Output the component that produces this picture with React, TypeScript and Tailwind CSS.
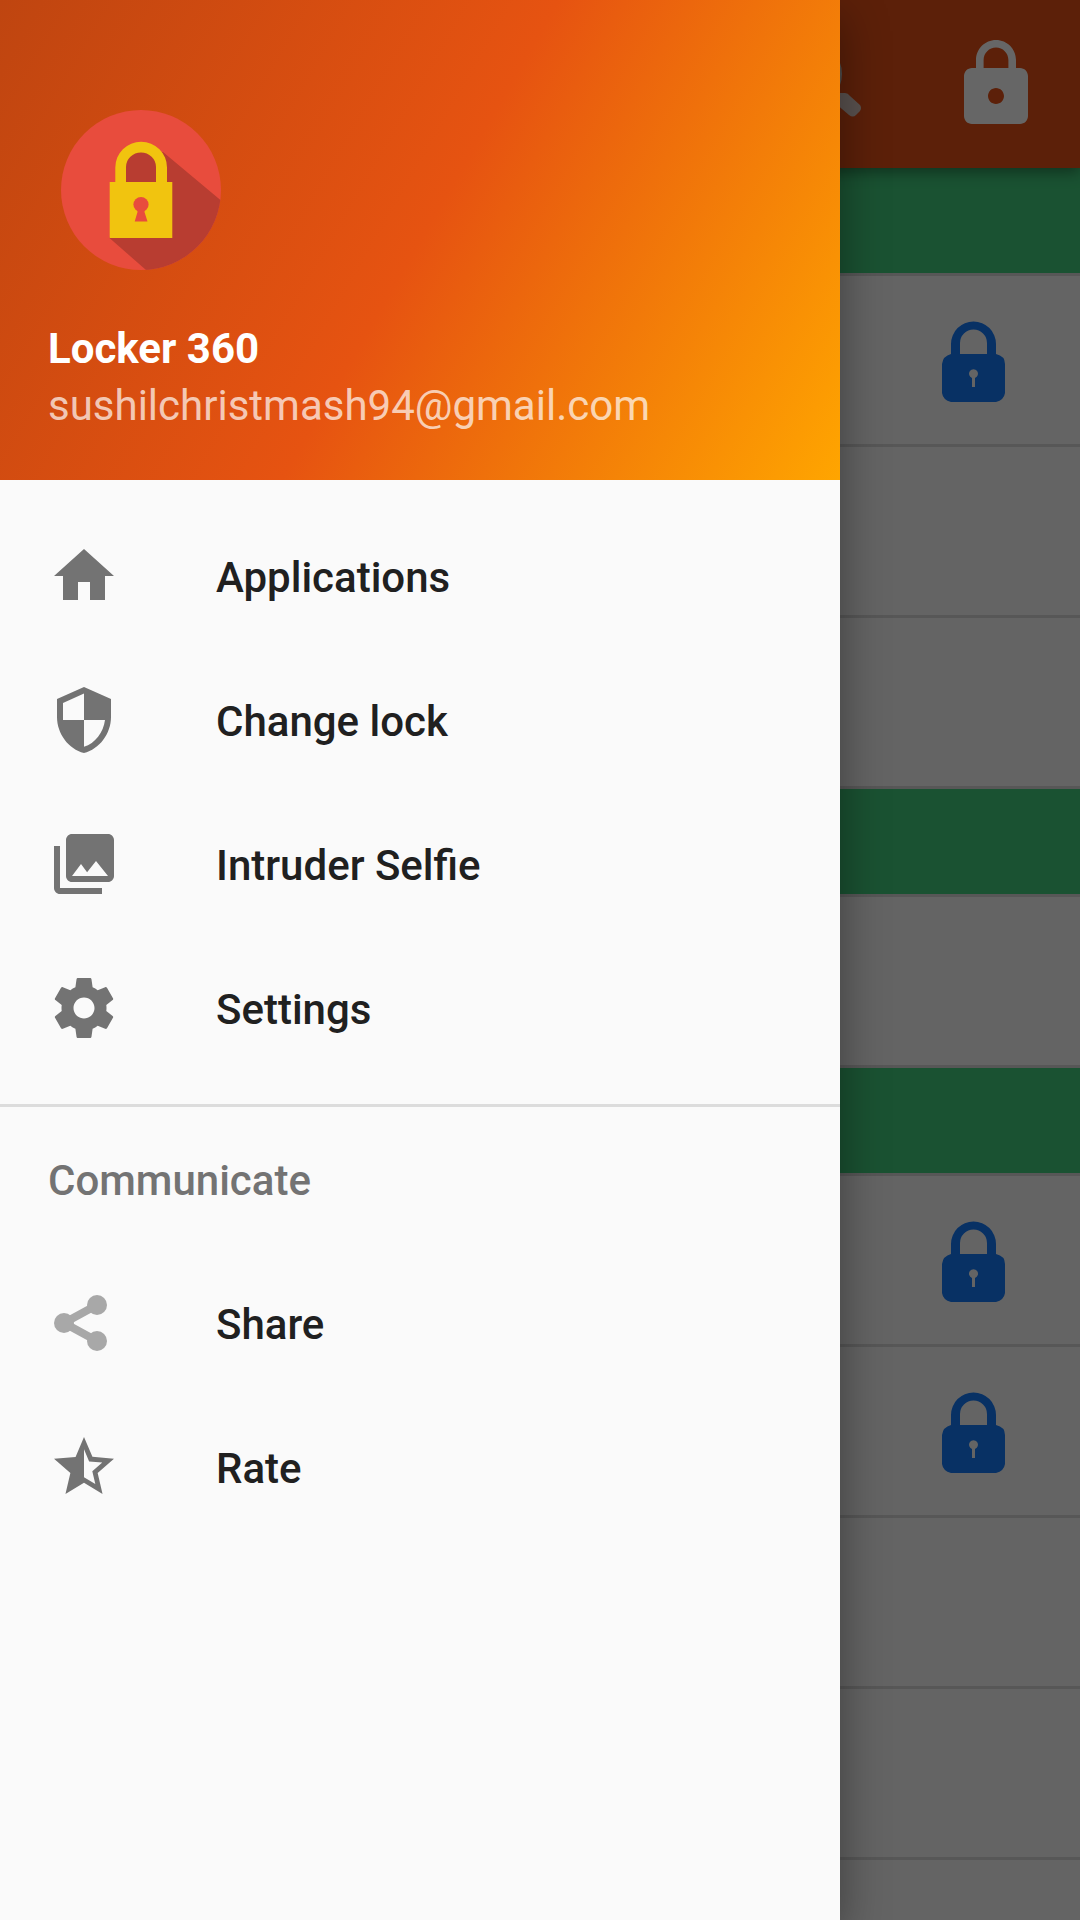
import React from "react";
import { MdHome, MdLock, MdPhotoLibrary, MdSecurity, MdStarHalf } from "react-icons/md";

const rows = [
  "header",
  "locked",
  "open",
  "open",
  "header",
  "open",
  "header",
  "locked",
  "locked",
  "open",
  "open",
  "open",
];

const SearchIcon = () => (
  <svg viewBox="0 0 96 96" className="size-24" aria-hidden="true">
    <circle cx="31" cy="38" r="27" fill="none" stroke="#c9c4c0" strokeWidth="8" />
    <path
      d="M50 50L58 57H65Q68 57 70 60L80 69Q82 72 80 75L76 79Q73 82 69 79L55 67L46 58Z"
      fill="#e0cdc6"
    />
  </svg>
);

const SettingsIcon = ({ className }: { className?: string }) => (
  <svg viewBox="0 0 24 24" fill="currentColor" className={className} aria-hidden="true">
    <path d="M19.43 12.98c.04-.32.07-.64.07-.98s-.03-.66-.07-.98l2.11-1.65c.19-.15.24-.42.12-.64l-2-3.46c-.12-.22-.39-.3-.61-.22l-2.49 1c-.52-.4-1.08-.73-1.69-.98l-.38-2.65C14.46 2.18 14.25 2 14 2h-4c-.25 0-.46.18-.49.42l-.38 2.65c-.61.25-1.17.59-1.69.98l-2.49-1c-.23-.09-.49 0-.61.22l-2 3.46c-.13.22-.07.49.12.64l2.11 1.65c-.04.32-.07.65-.07.98s.03.66.07.98l-2.11 1.65c-.19.15-.24.42-.12.64l2 3.46c.12.22.39.3.61.22l2.49-1c.52.4 1.08.73 1.69.98l.38 2.65c.03.24.24.42.49.42h4c.25 0 .46-.18.49-.42l.38-2.65c.61-.25 1.17-.59 1.69-.98l2.49 1c.23.09.49 0 .61-.22l2-3.46c.12-.22.07-.49-.12-.64l-2.11-1.65zM12 15.5c-1.93 0-3.5-1.57-3.5-3.5s1.57-3.5 3.5-3.5 3.5 1.57 3.5 3.5-1.57 3.5-3.5 3.5z" />
  </svg>
);

const ShareIcon = ({ className }: { className?: string }) => (
  <svg viewBox="0 0 72 72" className={className} aria-hidden="true">
    <path d="M49 18L16 36L49 54" fill="none" stroke="#a8a8a8" strokeWidth="8" />
    <circle cx="49" cy="18" r="10" fill="#a8a8a8" />
    <circle cx="16" cy="36" r="10" fill="#a8a8a8" />
    <circle cx="49" cy="54" r="10" fill="#a8a8a8" />
  </svg>
);

const BlueLock = () => (
  <svg viewBox="0 0 64 82" className="h-[82px] w-16" aria-hidden="true">
    <path
      fill="#147afb"
      fillRule="evenodd"
      d="M9 33V23A22.5 22.5 0 0 1 54 23V33Q63 35 63 43V72Q62 79 54 81H9Q1 79 0 72V43Q1 35 9 33ZM18 33H45V22A13.5 13.5 0 0 0 18 22ZM30 57V66H33V57A4.5 4.5 0 1 0 30 57Z"
    />
  </svg>
);

const Logo = () => (
  <svg viewBox="0 0 186 160" className="h-40 w-[186px]" aria-hidden="true">
    <clipPath id="disc">
      <circle cx="93" cy="80" r="80" />
    </clipPath>
    <circle cx="93" cy="80" r="80" fill="#e84c3d" />
    <path
      d="M78 42H108L115 42L173 90.5L173 160H98L61.5 128L78 72Z"
      fill="#b83d31"
      clipPath="url(#disc)"
    />
    <path
      fill="#f1c40f"
      fillRule="evenodd"
      d="M67.3 72V57.5A25.8 25.8 0 0 1 119 57.5V72H124.3V128H61.7V72ZM78 72H108V57A15 14.5 0 0 0 93 42.5A15 14.5 0 0 0 78 57Z"
    />
    <circle cx="93" cy="94.5" r="7.6" fill="#e84c3d" />
    <path d="M89.5 98H96.5V102L99.5 111.5H86.7L89.5 102Z" fill="#e84c3d" />
  </svg>
);

const mainLinks = [
  { label: "Applications", Icon: MdHome },
  { label: "Change lock", Icon: MdSecurity },
  { label: "Intruder Selfie", Icon: MdPhotoLibrary },
  { label: "Settings", Icon: SettingsIcon },
];

const communicateLinks = [
  { label: "Share", Icon: ShareIcon },
  { label: "Rate", Icon: MdStarHalf },
];

const NavItem = ({ label, Icon }: { label: string; Icon: React.ElementType }) => (
  <li>
    <a href="#" className="flex h-36 items-center gap-24 px-12 font-medium text-[#202020]">
      <Icon className="size-[72px] shrink-0 text-[#737373]" />
      <span className="pt-1">{label}</span>
    </a>
  </li>
);

const AppList = () => (
  <div className="flex h-full flex-col">
    <header className="z-10 flex h-42 shrink-0 items-center justify-end gap-18 bg-[#e65217] px-9 text-white shadow-[0_4px_14px_rgba(0,0,0,0.4)]">
      <button type="button" aria-label="Search">
        <SearchIcon />
      </button>
      <button type="button" aria-label="Lock all">
        <MdLock className="size-24" />
      </button>
    </header>
    <ul className="divide-y-3 divide-[#dadada] bg-[#fafafa]">
      {rows.map((kind, i) =>
        kind === "header" ? (
          <li key={i} className="box-content h-[105px] bg-[#41cd7d]" />
        ) : (
          <li key={i} className="box-content flex h-42 items-center justify-end">
            {kind === "locked" && (
              <button type="button" aria-label="Unlock app" className="mr-[74px] pt-1">
                <BlueLock />
              </button>
            )}
          </li>
        )
      )}
    </ul>
  </div>
);

const Drawer = () => (
  <aside className="absolute inset-y-0 left-0 z-30 w-7/9 bg-[#fafafa] shadow-[0_16px_44px_rgba(0,0,0,0.4)]">
    <div className="bg-linear-[120deg,#bf4510,#e65311,#ffa500] px-12 pt-[110px] pb-[46px] leading-[57px] text-white">
      <Logo />
      <div className="mt-[50px] font-bold">Locker 360</div>
      <div className="text-white/70">sushilchristmash94@gmail.com</div>
    </div>
    <nav>
      <ul className="border-b-3 border-[#dcdcdc] py-6">
        {mainLinks.map((link) => (
          <NavItem key={link.label} {...link} />
        ))}
      </ul>
      <h2 className="flex h-36 items-center px-12 pt-1 font-medium text-[#737373]">Communicate</h2>
      <ul>
        {communicateLinks.map((link) => (
          <NavItem key={link.label} {...link} />
        ))}
      </ul>
    </nav>
  </aside>
);

const App = () => {
  return (
    <div className="relative h-screen overflow-hidden bg-[#fafafa] font-['Roboto',sans-serif] text-[42px] leading-[50px]">
      <AppList />
      <div className="absolute inset-0 z-20 bg-black/60" />
      <Drawer />
    </div>
  );
};

export default App;
